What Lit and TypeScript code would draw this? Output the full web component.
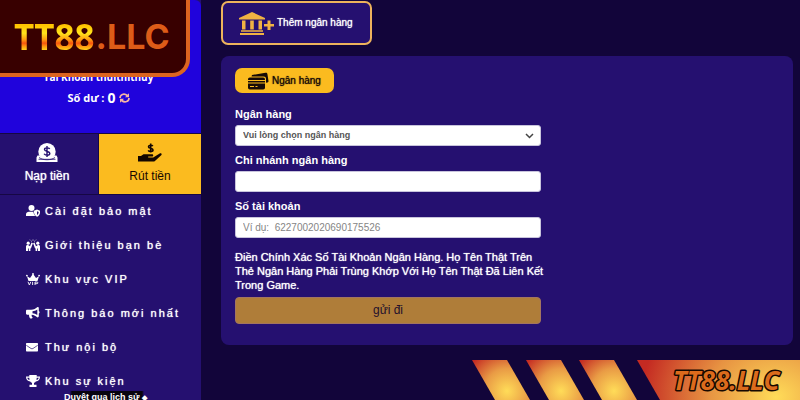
import { LitElement, html, svg, css } from "lit";
import { customElement } from "lit/decorators.js";

const icons = {
  user: svg`<circle cx="5.500" cy="3" r="3"/><path d="M0 11V9.600C0 7.800 1.400 6.800 3 6.800h4.400c.3 2 1 3.500 2 4.200z"/><path d="M11 4.500l3.200 1.300c0 2.900-.9 4.900-3.200 5.900-2.300-1-3.200-3-3.200-5.900z"/><path d="M11 6.300v3.800c1-.6 1.600-1.700 1.700-3.100z" fill="#251070"/>`,
  friends: svg`<circle cx="2.200" cy="4.200" r="1.600"/><circle cx="11.800" cy="4.200" r="1.600"/><path d="M0 12V7.500C0 6 1.600 5.600 2.800 6.400l1.200.8 1.500-3.600 1.400.6L5 9.200l-.6.200V12H2.800V9.500H2V12zM14 12V7.500c0-1.500-1.600-1.900-2.800-1.100l-1.200.8-1.500-3.600-1.400.6L9 9.200l.6.200V12h1.600V9.500h.8V12z"/><path d="M5 1.800l.8.700M7 .5v1.200M9 1.800l-.8.700M3.700.8l.7.400M10.300.8l-.7.400" stroke="#fff" stroke-width=".7"/>`,
  trophy: svg`<path d="M3.300 0h7.400v1.500H14c0 3-1.400 4.600-4.200 4.900C9.300 7.200 8.700 7.600 8 7.800v2h2.500V12h-7V9.800H6v-2c-.7-.2-1.300-.6-1.800-1.400C1.400 6.100 0 4.500 0 1.500h3.300zM1.300 2.700c.2 1.200.9 2 2.200 2.300l-.2-2.300zm11.400 0h-2l-.2 2.300c1.300-.3 2-1.100 2.200-2.300z"/>`,
  horn: svg`<path d="M11.500 0c1 0 1.300.5 1.300 1.400v2.500c1 .6 1 2.100 0 2.700v2.500c0 .9-.4 1.300-1.300 1.300C9.800 9 8 8 5.700 7.700c-.3 1.300.2 2.200 1 2.800-.5 1.300-2.300 1.300-2.900.4-.4-1-1-2-.7-3.200H1.200C.5 7.700 0 7.200 0 6.500V4c0-.7.5-1.200 1.200-1.200h3.900C7.800 2.800 9.800 1.500 11.500 0zM11.300 2.400C9.800 3.300 8.300 4 6.500 4.200v2.100c1.800.2 3.300.8 4.800 1.700z"/>`,
  mail: svg`<path d="M1 2h10c.6 0 1 .4 1 1v6.500c0 .6-.4 1-1 1H1c-.6 0-1-.4-1-1V3c0-.6.400-1 1-1z"/><path d="M.3 4.300L5 7.500c.7.400 1.300.4 2 0l4.700-3.200" fill="none" stroke="#251070" stroke-width=".7"/>`,
  crown: svg`<path d="M2.500 8L1 3.200l3 1.700L7 .8l3 4.100 3-1.700L11.500 8z"/><circle cx=".9" cy="2.600" r=".9"/><circle cx="7" cy=".9" r=".9"/><circle cx="13.100" cy="2.600" r=".9"/><path d="M2 8.800l1.400 3.200 1.400-3.200M6.600 8.800V12M9 12V9h2c1.200 0 1.200 1.700 0 1.700H9" fill="none" stroke="#fff" stroke-width=".9"/>`,
};

const menu = [
  { icon: icons.user, label: "Cài đặt bảo mật" },
  { icon: icons.friends, label: "Giới thiệu bạn bè" },
  { icon: icons.crown, label: "Khu vực VIP" },
  { icon: icons.horn, label: "Thông báo mới nhất" },
  { icon: icons.mail, label: "Thư nội bộ" },
  { icon: icons.trophy, label: "Khu sự kiện" },
];

@customElement("side-bar")
export class SideBar extends LitElement {
  static styles = css`
    :host { display: flex; flex-direction: column; background: #251070; color: #fff; }
    .profile {
      display: flex; flex-direction: column; align-items: center; gap: 4px;
      height: 133px; box-sizing: border-box; padding-top: 69px;
      padding-right: 4px;
      background: #2003dc; border-radius: 0 6px 0 0;
      font: bold 11px/16px "Open Sans", sans-serif;
    }
    .name { font-size: 10px; }
    .balance { display: flex; align-items: center; gap: 3px; height: 18px; }
    .amount { font-size: 14px; }
    .refresh { border: 0; padding: 0; background: none; display: flex; }
    .actions {
      display: grid; grid-template-columns: 98px 1fr; gap: 1px; background: #160744;
      border-top: 1px solid #160744; border-bottom: 1px solid #160744;
    }
    .action {
      display: flex; flex-direction: column; align-items: center; gap: 5px; height: 60px;
      box-sizing: border-box; padding: 9px 4px 0 0; border: 0; background: #251070; color: #fff;
      font: 12px/16px "Liberation Sans", sans-serif; text-shadow: 0 0 1px currentColor;
    }
    .active { background: #fbbb1f; color: #180800; padding-right: 0; text-shadow: none; }
    .menu { list-style: none; margin: 0; padding: 0; }
    .item {
      display: flex; align-items: center; gap: 5px; height: 34px; box-sizing: border-box;
      padding: 0 0 2px 26px;
      color: #fff; text-decoration: none; letter-spacing: 2px; white-space: nowrap;
      font: 11px/16px "Liberation Sans", sans-serif; text-shadow: 0 0 1px #fff;
    }
    .glyph { flex: none; }
  `;
  render() {
    return html`
      <section class="profile">
        <div class="name">Tài Khoản thuithithuy</div>
        <div class="balance">Số dư : <span class="amount">0</span>
          <button class="refresh" aria-label="Làm mới">
            <svg width="11" height="10" viewBox="0 0 11 10" fill="none" stroke="#f4b5a4" stroke-width="1.700"><path d="M1 5C1 1.500 5-.2 8.300 2.500M10 5C10 8.500 6 10.200 2.700 7.500"/><path d="M10 .3v3.900H6zM1 9.700V5.800h4z" stroke="none" fill="#f4b5a4"/></svg>
          </button>
        </div>
      </section>
      <div class="actions">
        <button class="action">
          <svg width="22" height="20" viewBox="0 0 22 20"><circle cx="11" cy="8.700" r="8.700" fill="#fff"/><path d="M1.500 12.500h2c3 5 12 5 15 0h2l1 2v4.500H.5v-4.500z" fill="#fff"/><path d="M3 14.500c4 3 12 3 16 0M2.500 16.300h17" fill="none" stroke="#251070" stroke-width=".8"/><path d="M13.700 6C13 4.600 8.500 4.300 8.500 6.500c0 2.500 5.300 1.300 5.300 4 0 2.200-4.800 2.200-5.700.3M11 3v11" fill="none" stroke="#251070" stroke-width="1.400"/></svg>
          Nạp tiền
        </button>
        <button class="action active">
          <svg width="24" height="20" viewBox="0 0 24 20"><path d="M14.800 3.200C14 1.800 10.500 1.800 10.500 3.700c0 2 4.500 1.200 4.500 3.200 0 1.900-3.800 2-4.800.4M12.700.5v9" fill="none" stroke="#120600" stroke-width="1.600"/><path d="M0 13h3l2.500-1.700H14c1.600 0 1.600 2.200 0 2.200h-3.800v.9h5l6.500-4c1.400-.7 2.700.6 1.500 1.900l-6 5.500c-.6.600-1.200.8-2 .8H0z" fill="#120600"/></svg>
          Rút tiền
        </button>
      </div>
      <nav><ul class="menu">
        ${menu.map((m) => html`<li><a class="item" href="#">
          <svg class="glyph" width="14" height="12" viewBox="0 0 14 12" fill="#fff">${m.icon}</svg>${m.label}</a></li>`)}
      </ul></nav>
    `;
  }
}

@customElement("bank-form")
export class BankForm extends LitElement {
  static styles = css`
    :host { display: block; background: #251070; border-radius: 8px; color: #fff; padding: 12px 14px 21px;
      font: bold 11px/16px "Liberation Sans", sans-serif; }
    .tab { display: inline-flex; align-items: center; gap: 3px; height: 25px; padding: 0 13px; border: 0;
      border-radius: 7px; background: #fbbb1f; color: #180c08; font: 10px/16px "Liberation Sans", sans-serif;
      text-shadow: 0 0 1px #180c08; }
    form { display: flex; flex-direction: column; max-width: 306px; margin-top: 12px; }
    .label { height: 19px; line-height: 17px; }
    .field { box-sizing: border-box; width: 100%; height: 21px; margin: 0 0 6px; padding: 0 7px;
      border: 1px solid #c8c4dc; border-radius: 3px; background: #fff; color: #555;
      font: bold 9px/16px "Liberation Sans", sans-serif; }
    .number { font-size: 10px; font-weight: normal; }
    .field::placeholder { color: #858585; opacity: 1; }
    .select { position: relative; }
    .choice { appearance: none; }
    .arrow { position: absolute; right: 7px; top: 8px; pointer-events: none; }
    .note { margin: 6px -8px 5px 0; line-height: 14px; font-weight: normal; text-shadow: 0 0 1px #fff; }
    .send { height: 27px; border: 1px solid #a37560; border-radius: 4px; background: #af7d39; color: #24102c;
      font: 12px/16px "Liberation Sans", sans-serif; }
  `;
  render() {
    return html`
      <button class="tab">
        <svg width="21" height="18" viewBox="0 0 21 18"><path d="M4 3L17.500.8c1.200-.2 1.700.3 1.900 1.300L20.500 9c.1.700-.2 1.200-1 1.400l-1.500.3V7c0-1.700-.8-2.500-2.500-2.500H3.500z" fill="#160b08"/><rect y="5.500" width="17" height="12" rx="1.800" fill="#160b08"/><path d="M0 8.500h17M0 11h17M2 14.500h4M7.500 14.500h2" stroke="#fbbb1f" stroke-width="1"/></svg>
        Ngân hàng
      </button>
      <form @submit=${(e: Event) => e.preventDefault()}>
        <label class="label" for="bank">Ngân hàng</label>
        <div class="select">
          <select class="field choice" id="bank"><option>Vui lòng chọn ngân hàng</option></select>
          <svg class="arrow" width="9" height="6" viewBox="0 0 9 6"><path d="M1 1l3.500 3.500L8 1" fill="none" stroke="#444" stroke-width="1.500"/></svg>
        </div>
        <label class="label" for="branch">Chi nhánh ngân hàng</label>
        <input class="field" id="branch" type="text" />
        <label class="label" for="account">Số tài khoản</label>
        <input class="field number" id="account" type="text" placeholder="Ví dụ:  6227002020690175526" />
        <p class="note">Điền Chính Xác Số Tài Khoản Ngân Hàng. Họ Tên Thật Trên Thẻ Ngân Hàng Phải Trùng Khớp Với Họ Tên Thật Đã Liên Kết Trong Game.</p>
        <button class="send">gửi đi</button>
      </form>
    `;
  }
}

@customElement("app-root")
export class AppRoot extends LitElement {
  static styles = css`
    :host { display: grid; grid-template-columns: 201px minmax(0, 1fr); position: relative; min-height: 100vh;
      overflow: hidden; background: #12053a; }
    .main { padding: 1px 7px 55px 20px; }
    .add { display: flex; align-items: center; gap: 3px; width: 151px; height: 44px; margin-bottom: 11px;
      box-sizing: border-box; padding: 0 16px; border: 2px solid #edb35c; border-radius: 7px; background: #251070;
      color: #fff; white-space: nowrap; font: 10px/16px "Liberation Sans", sans-serif; text-shadow: 0 0 1px #fff; }
    .logo { position: absolute; left: 0; top: 0; display: flex; align-items: center; gap: 1px;
      width: 190px; height: 77px; box-sizing: border-box; padding: 0 0 0 14px; border: solid #dc6420;
      border-width: 0 4px 4px 0; border-radius: 0 0 18px 0; background: #380000; color: #dd5c18; text-decoration: none; }
    .brand { font: bold 35px/48px "Open Sans", sans-serif; color: transparent; background-clip: text;
      background-image: linear-gradient(#ffc400 26%, #ffe51c 42%, #ffa010 55%, #f8560f 63%, #ff9c10 70%, #ffd81c 78%); }
    .suffix { font: bold 34px/48px "Inter", sans-serif; }
    .history { position: absolute; left: 64px; bottom: -4px; color: #fff; white-space: nowrap;
      font: bold 9px/12px "Liberation Sans", sans-serif;
      background: linear-gradient(90deg, transparent 6px, #08040f 8px, #08040f 78px, transparent 80px); }
    .mark { font-size: 7px; }
    .banner { position: absolute; right: 0; bottom: 0; display: block; }
    .word { font: italic bold 26px "Open Sans", sans-serif; fill: #dc6b1c; stroke: #160800; stroke-width: 3px;
      paint-order: stroke; stroke-linejoin: round; }
  `;
  render() {
    return html`
      <side-bar></side-bar>
      <main class="main">
        <button class="add">
          <svg width="35" height="23" viewBox="0 0 35 23" fill="#f0b243"><path d="M0 6L13 0l13 6v1.500H0zM2 18.200h22v1.600H2zM1 21h24v2H1zM3 8.500h3.500v9H3zM11.200 8.500h3.600v9h-3.600zM19.500 8.500H23v9h-3.500z"/><path d="M28.500 8.500h3V12H35v2.500h-3.500V18h-3v-3.500H25V12h3.500z"/></svg>
          Thêm ngân hàng
        </button>
        <bank-form></bank-form>
      </main>
      <a class="logo" href="#"><span class="brand">TT88</span><span class="suffix">.LLC</span></a>
      <div class="history">Duyệt qua lịch sử <span class="mark">◆</span></div>
      <svg class="banner" width="328" height="40" viewBox="0 0 328 40">
        <defs>
          <radialGradient id="ray" cx="35" cy="31" r="45" gradientUnits="userSpaceOnUse">
            <stop offset="0" stop-color="#ffdc58"/><stop offset=".5" stop-color="#e99b45"/><stop offset="1" stop-color="#c42a22"/>
          </radialGradient>
          <radialGradient id="glow" cx="0" cy="0" r="1" gradientUnits="userSpaceOnUse" gradientTransform="translate(304 37) scale(135 112)">
            <stop offset="0" stop-color="#ffdc58"/><stop offset=".5" stop-color="#e79342"/><stop offset="1" stop-color="#c42a22"/>
          </radialGradient>
        </defs>
        <path d="M0 0h35l23 40H23z" fill="url(#ray)"/>
        <path d="M0 0h35l23 40H23z" fill="url(#ray)" transform="translate(54)"/>
        <path d="M0 0h35l23 40H23z" fill="url(#ray)" transform="translate(107)"/>
        <path d="M165 0h163v40H188z" fill="url(#glow)"/>
        <text class="word" x="201" y="30">TT88.LLC</text>
      </svg>
    `;
  }
}
